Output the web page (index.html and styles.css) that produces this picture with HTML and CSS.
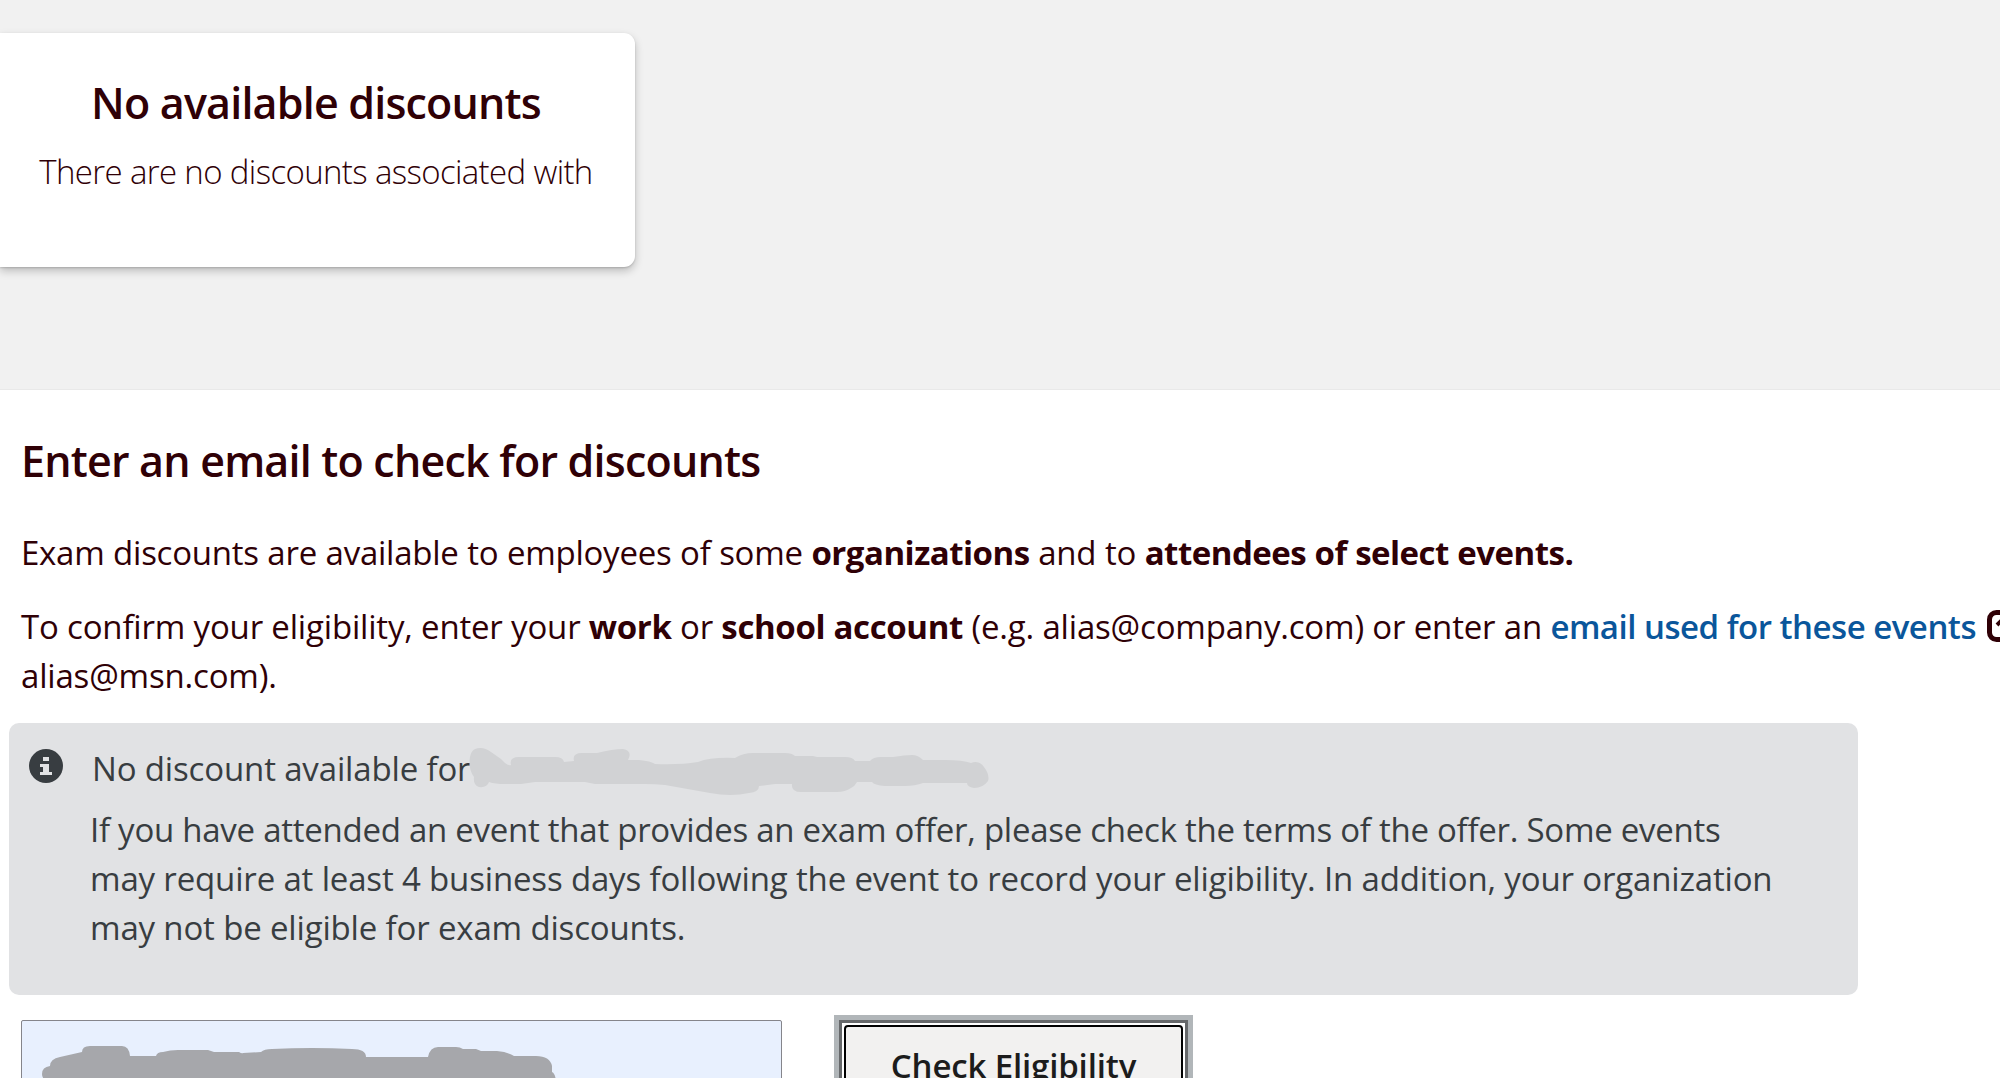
FILE: index.html
```html
<!DOCTYPE html>
<html lang="en">
<head>
    <meta charset="UTF-8">
    <title>Exam discounts</title>
    <link rel="stylesheet" href="styles.css">
</head>
<body>
    <div class="discounts">
        <div class="card">
            <h2>No available discounts</h2>
            <p>There are no discounts associated with</p>
        </div>
    </div>

    <div class="check-section">
        <h2>Enter an email to check for discounts</h2>
        <p class="intro">Exam discounts are available to employees of some <b>organizations</b> and to <b>attendees of select events.</b></p>
        <p class="confirm">To confirm your eligibility, enter your <b>work</b> or <b>school account</b> (e.g. alias@company.com) or enter an <a href="#">email used for these events</a><svg class="external-icon" viewBox="0 0 32 32">
                <rect x="2.5" y="2.5" width="27" height="27" rx="7" />
                <path class="arrow" d="M10 15L16 9L22 15M16 9V24" />
            </svg><br>alias@msn.com).</p>

        <div class="alert">
            <svg class="info-icon" viewBox="0 0 34 34">
                <circle cx="17" cy="17" r="17" />
                <path d="M14 8h6v4h-6zM11 15h9v8h3v3H11v-3h3v-5h-3z" />
            </svg>
            <div class="alert-body">
                <div class="alert-title">No discount available for<svg class="redacted" viewBox="0 0 524 50">
                        <path d="M10 2Q18 -1 26 5L36 12L40 16Q44 19 46 18Q44 10 54 10H90Q98 10 99 15L109 14Q107 6 117 6H132Q148 2 158 2Q168 4 163 13H174Q186 14 190 17Q215 18 233 15Q246 10 270 11Q278 6 288 6H320Q327 6 330 9H348L352 10H380Q388 10 390 14H405Q408 10 416 10H428Q440 8 447 8Q453 8 458 13H480Q498 13 506 16Q514 13 519 20Q525 28 523 34Q518 41 509 41Q502 40 502 36H458Q450 39 440 39H420Q409 38 407 35H392Q390 39 386 41Q380 45 372 45H336Q326 45 327 37H310L294 39Q294 45 284 46Q266 50 245 46L200 38Q190 37 180 37H130L120 35H70L56 37H40Q30 37 24 35Q22 41 14 40Q8 38 9 30Q3 22 5 10Q6 4 10 2Z" />
                    </svg></div>
                <p>If you have attended an event that provides an exam offer, please check the terms of the offer. Some events<br><span class="wide">may require at least 4 business days following the event to record your eligibility. In addition, your organization</span><br><span class="wide">may not be eligible for exam discounts.</span></p>
            </div>
        </div>

        <div class="form-row">
            <div class="email-field">
                <svg viewBox="0 0 514 58">
                    <path d="M0 48Q0 41 8 40Q8 33 18 31L40 26Q40 20 48 20H80Q87 20 88 30H114Q115 26 121 26Q128 24 136 24H166L172 26H197Q200 28 201 27L219 26Q222 23 230 23Q270 21 310 23Q324 23 324 31H386Q388 21 396 21H414Q418 21 421 23H434L439 25H455Q466 26 472 30H494Q508 30 510 40V46Q514 48 514 58H14Q0 56 0 48Z" />
                </svg>
            </div>
            <div class="focus-ring">
                <button class="btn">Check Eligibility</button>
            </div>
        </div>
    </div>
</body>
</html>
```
FILE: styles.css
```css
* {
    box-sizing: border-box;
    margin: 0;
    padding: 0;
}

body {
    height: 1078px;
    overflow: hidden;
    background: #fff;
    color: #2f0006;
    font-family: "Open Sans", "Noto Sans", sans-serif;
    font-size: 33px;
    line-height: 49px;
    letter-spacing: -0.25px;
    white-space: nowrap;
}

h2 {
    font-size: 43px;
    font-weight: 600;
    line-height: 58px;
    letter-spacing: -0.8px;
}

b {
    font-weight: 700;
    letter-spacing: -0.5px;
}

.discounts {
    height: 390px;
    padding-top: 33px;
    background: #f1f1f1;
    border-bottom: 1px solid #e9e9e9;
}

.card {
    width: 635px;
    height: 234px;
    padding: 41px 3px 0 0;
    background: #fff;
    border-radius: 0 11px 11px 0;
    box-shadow: 0 4px 9px rgba(0, 0, 0, 0.22), 0 1px 2px rgba(0, 0, 0, 0.15);
    text-align: center;
}

.card p {
    margin-top: 15px;
    font-weight: 300;
    letter-spacing: -0.64px;
}

.check-section {
    padding: 42px 0 0 21px;
}

.check-section h2 {
    letter-spacing: -0.79px;
}

.intro {
    margin-top: 38px;
    word-spacing: 0.3px;
}

.confirm {
    margin-top: 25px;
    letter-spacing: -0.18px;
}

.confirm b {
    letter-spacing: -0.35px;
}

.confirm a {
    color: #0a569b;
    font-weight: 600;
    letter-spacing: -0.5px;
    text-decoration: none;
}

.external-icon {
    width: 32px;
    height: 32px;
    margin-left: 11px;
    vertical-align: -3px;
    fill: none;
    stroke: #2f0006;
    stroke-width: 5;
}

.external-icon .arrow {
    stroke-width: 4;
}

.alert {
    display: flex;
    width: 1849px;
    height: 272px;
    margin: 23px 0 0 -12px;
    padding: 21px 0 0 20px;
    background: #e1e2e4;
    border-radius: 10px;
    color: #383d41;
    letter-spacing: -0.26px;
}

.info-icon {
    width: 34px;
    height: 34px;
    margin: 5px 27px 0 0;
}

.info-icon circle {
    fill: #383d41;
}

.info-icon path {
    fill: #e1e2e4;
}

.alert-title {
    height: 61px;
    padding-left: 2px;
    letter-spacing: -0.15px;
}

.redacted {
    width: 524px;
    height: 50px;
    margin-left: -5px;
    vertical-align: -16px;
    fill: #d1d2d4;
}

.wide {
    letter-spacing: -0.16px;
}

.form-row {
    display: flex;
    align-items: flex-start;
    padding-top: 20px;
}

.email-field {
    width: 761px;
    height: 84px;
    margin-top: 5px;
    padding-left: 20px;
    background: #e8f0fe;
    border: 1px solid #85858b;
    border-radius: 2px;
}

.email-field svg {
    display: block;
    width: 514px;
    height: 58px;
    margin-top: 5px;
    fill: #a6a7ab;
}

.focus-ring {
    width: 359px;
    margin-left: 52px;
    padding: 5px;
    background: #fff;
    border: 5px solid #b1b6b9;
    box-shadow: inset 0 0 0 3px #66686a;
}

.btn {
    display: block;
    width: 100%;
    height: 80px;
    background: #f2f1f0;
    border: 2px solid #000;
    border-radius: 4px;
    color: #1c1c1c;
    font: 600 33px/49px "Open Sans", "Noto Sans", sans-serif;
    letter-spacing: -0.15px;
}
```
